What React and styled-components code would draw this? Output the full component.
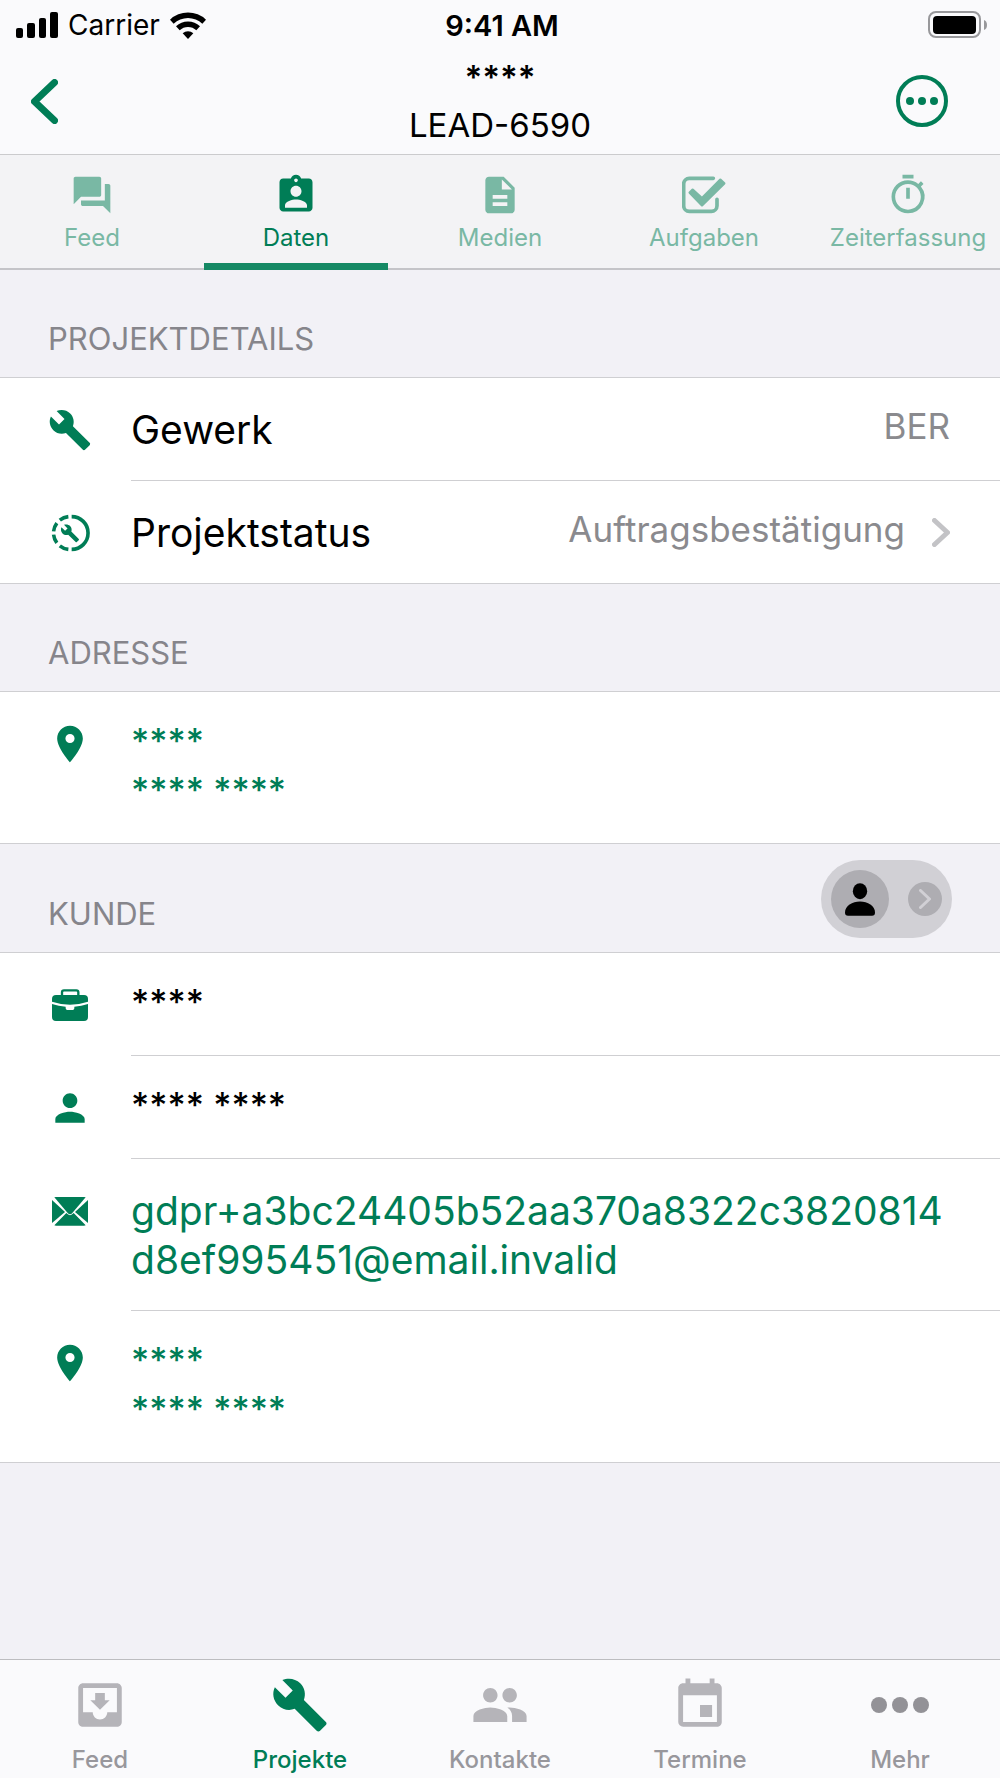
import React, {useState} from 'react'
import styled, {createGlobalStyle} from 'styled-components'
import {
    MdForum, MdAssignmentInd, MdDescription, MdOutlineTimer, MdBuild, MdLocationOn,
    MdPerson, MdMoveToInbox, MdPeople, MdEvent
} from 'react-icons/md'

const green = '#007d56'
const line = '#cfcfd2'

const GlobalStyle = createGlobalStyle`
    * {
        box-sizing: border-box;
    }
    body {
        margin: 0;
        background: #f2f1f6;
        color: #000;
        font-family: Inter, "Liberation Sans", sans-serif;
    }
    button {
        font-family: inherit;
        color: inherit;
        background: none;
        border: 0;
        padding: 0;
        cursor: pointer;
    }
    a {
        color: inherit;
        text-decoration: none;
    }
    svg {
        display: block;
        flex: none;
    }
`;

const Page = styled.div`
    min-height: 100vh;
    display: flex;
    flex-direction: column;
`;

const Header = styled.header`
    background: #fafafc;
    border-bottom: 1px solid #cbcbcd;
`;

const StatusBar = styled.div`
    height: 50px;
    padding: 0 12px 0 16px;
    display: grid;
    grid-template-columns: 1fr auto 1fr;
    align-items: center;
    font-size: 28px;
`;

const Carrier = styled.div`
    display: flex;
    align-items: center;
    gap: 10px;
`;

const Time = styled.div`
    font-weight: 600;
    font-size: 29px;
`;

const BatteryBox = styled.div`
    display: flex;
    justify-content: flex-end;
`;

const NavBar = styled.div`
    height: 104px;
    padding: 0 52px 2px 31px;
    display: grid;
    grid-template-columns: 73px 1fr 52px;
    align-items: center;
`;

const Title = styled.h1`
    margin: 0;
    font-size: 33px;
    line-height: 48px;
    font-weight: 400;
    text-align: center;
`;

const Masked = styled.span`
    display: block;
    font-weight: 600;
`;

const TabBar = styled.nav`
    height: 115px;
    display: grid;
    grid-template-columns: repeat(5, 1fr);
    gap: 20px;
    background: #f3f3f5;
    border-bottom: 2px solid #c4c4c8;
`;

const Tab = styled.button`
    margin-bottom: -2px;
    padding-top: 18px;
    display: flex;
    flex-direction: column;
    align-items: center;
    gap: 7px;
    font-size: 24px;
    line-height: 28px;
    color: ${({ $active }) => ($active ? green : '#79b8a4')};
    border-bottom: 7px solid ${({ $active }) => ($active ? '#158964' : 'transparent')};
`;

const SectionHeader = styled.div`
    min-height: 107px;
    padding: 16px 48px 14px;
    display: flex;
    align-items: flex-end;
    justify-content: space-between;
`;

const SectionTitle = styled.h2`
    margin: 0 0 6px;
    font-size: 31px;
    line-height: 36px;
    font-weight: 400;
    color: #86858b;
`;

const List = styled.div`
    background: #fff;
    border-top: 1px solid ${line};
    border-bottom: 1px solid ${line};
`;

const Row = styled.div`
    width: 100%;
    padding-left: 48px;
    display: flex;
    align-items: flex-start;
    text-align: left;
    color: ${({ $link }) => ($link ? green : '#000')};

    > svg {
        margin: 30px 39px 0 0;
        color: ${green};
    }
`;

const RowBody = styled.div`
    flex: 1;
    min-width: 0;
    padding: ${({ $masked }) => ($masked ? '25px 50px 28px 0' : '27px 50px 26px 0')};
    display: flex;
    justify-content: space-between;
    font-size: ${({ $masked }) => ($masked ? 35 : 39)}px;
    font-weight: ${({ $masked }) => ($masked ? 500 : 400)};
    line-height: 49px;

    ${Row}:not(:last-child) > & {
        border-bottom: 1px solid ${line};
    }
`;

const Text = styled.span`
    overflow-wrap: anywhere;
`;

const Value = styled.span`
    display: flex;
    gap: 27px;
    font-size: 35px;
    line-height: 43px;
    color: #8a8a8e;

    svg {
        margin-top: 10px;
    }
`;

const Switcher = styled.div`
    padding: 10px;
    display: flex;
    align-items: center;
    gap: 19px;
    border-radius: 39px;
    background: #d1d0d5;
`;

const RoundButton = styled.button`
    width: ${({ $size }) => $size}px;
    height: ${({ $size }) => $size}px;
    display: flex;
    align-items: center;
    justify-content: center;
    border-radius: 50%;
    background: #aeadb2;
`;

const BottomBar = styled.nav`
    height: 119px;
    margin-top: auto;
    display: grid;
    grid-template-columns: repeat(5, 1fr);
    background: #fafafc;
    border-top: 1px solid #bdbdc0;
`;

const BottomLink = styled.a`
    padding-top: 16px;
    display: flex;
    flex-direction: column;
    align-items: center;
    gap: 12px;
    font-size: 24px;
    line-height: 28px;
    font-weight: 500;
    color: ${({ $active }) => ($active ? green : '#98979c')};

    svg {
        color: ${({ $active }) => ($active ? green : '#b5b4b9')};
    }
`;

const Signal = () => (
    <svg width="42" height="26" viewBox="0 0 42 26">
        <rect x="0" y="16" width="7" height="10" rx="2" />
        <rect x="11" y="11" width="8" height="15" rx="2" />
        <rect x="23" y="6" width="7" height="20" rx="2" />
        <rect x="34" y="0" width="8" height="26" rx="2" />
    </svg>
)

const Wifi = () => (
    <svg width="36" height="27" viewBox="0 0 108 81">
        <path d="M0 23a78 78 0 0 1 108 0l-11 12a62 62 0 0 0-86 0z" />
        <path d="M18 43a52 52 0 0 1 72 0l-11 12a36 36 0 0 0-50 0z" />
        <path d="M38 64a24 24 0 0 1 32 0L54 81z" />
    </svg>
)

const Battery = () => (
    <svg width="60" height="28" viewBox="0 0 60 28">
        <rect x="1" y="1" width="51" height="25" rx="7" fill="none" stroke="#98989b" strokeWidth="2" />
        <rect x="5" y="5" width="43" height="18" rx="4" />
        <path d="M56 9q3 1 3 5t-3 5z" fill="#98989b" />
    </svg>
)

const Chevron = ({ width, height, stroke, color, back }) => (
    <svg width={width} height={height} fill="none" stroke={color} strokeWidth={stroke} strokeLinecap="round" strokeLinejoin="round">
        <path
            d={back
                ? `M${width - stroke / 2} ${stroke / 2}L${stroke / 2} ${height / 2}L${width - stroke / 2} ${height - stroke / 2}`
                : `M${stroke / 2} ${stroke / 2}L${width - stroke / 2} ${height / 2}L${stroke / 2} ${height - stroke / 2}`}
        />
    </svg>
)

const MoreCircle = () => (
    <svg width="52" height="52" viewBox="0 0 52 52" fill={green}>
        <circle cx="26" cy="26" r="24" fill="none" stroke={green} strokeWidth="4" />
        <circle cx="14" cy="26" r="4" />
        <circle cx="26" cy="26" r="4" />
        <circle cx="38" cy="26" r="4" />
    </svg>
)

const CheckBoxIcon = () => (
    <svg width="44" height="44" viewBox="0 -10 132 132">
        <path d="M94 6H22A17 17 0 0 0 5 23V88A17 17 0 0 0 22 105H88A17 17 0 0 0 105 88V69" fill="none" stroke="currentColor" strokeWidth="11" strokeLinecap="round" />
        <path d="M23 49L32 40L60 65L115 10L127 21L60 87Z" fill="currentColor" stroke="currentColor" strokeWidth="7" strokeLinejoin="round" />
    </svg>
)

const StatusIcon = () => (
    <svg width="44" height="44" viewBox="-12 -12 134 134">
        <g fill="none" stroke="currentColor" strokeWidth="11">
            <path d="M60 5A50 50 0 0 1 60 105" />
            <path d="M50 5A50 50 0 0 0 24 16" />
            <path d="M15 25A50 50 0 0 0 5 50" />
            <path d="M5 60A50 50 0 0 0 15 85" />
            <path d="M24 94A50 50 0 0 0 50 105" />
        </g>
        <MdBuild x={25} y={26} size={60} />
    </svg>
)

const BriefcaseIcon = () => (
    <svg width="44" height="44" viewBox="-12 -18 132 132" fill="currentColor">
        <path d="M30 20V10Q30 4 36 4H73Q79 4 79 10V20" fill="none" stroke="currentColor" strokeWidth="7" />
        <path d="M12 18H96Q108 18 108 30V38Q54 56 0 38V30Q0 18 12 18Z" />
        <path d="M0 45Q20 51 41 53V58Q41 63 46 63H62Q67 63 67 58V53Q88 51 108 45V84Q108 96 96 96H12Q0 96 0 84Z" />
    </svg>
)

const MailIcon = () => (
    <svg width="44" height="44" viewBox="-12 -24 132 132" fill="currentColor">
        <path d="M7 1Q9 0 12 0H96Q99 0 101 1L61 48Q54 56 47 48Z" />
        <path d="M0 9L39 45L0 78Z" />
        <path d="M108 9L69 45L108 78Z" />
        <path d="M7 85L43 48Q54 61 65 48L101 85Q99 86 96 86H12Q9 86 7 85Z" />
    </svg>
)

const UserIcon = () => (
    <svg width="30" height="33" viewBox="0 0 90 98">
        <ellipse cx="45" cy="24" rx="21.5" ry="24" />
        <path d="M9 98Q0 98 0 88C0 68 22 55 45 55S90 68 90 88Q90 98 81 98Z" />
    </svg>
)

const Dots = () => (
    <svg width="58" height="58" viewBox="0 0 58 58" fill="#939297">
        <circle cx="8" cy="29" r="8" />
        <circle cx="29" cy="29" r="8" />
        <circle cx="50" cy="29" r="8" />
    </svg>
)

const tabs = [
    { title: 'Feed', icon: <MdForum size={44} /> },
    { title: 'Daten', icon: <MdAssignmentInd size={44} /> },
    { title: 'Medien', icon: <MdDescription size={44} /> },
    { title: 'Aufgaben', icon: <CheckBoxIcon /> },
    { title: 'Zeiterfassung', icon: <MdOutlineTimer size={44} /> }
]

const bottomLinks = [
    { title: 'Feed', icon: <MdMoveToInbox size={58} /> },
    { title: 'Projekte', icon: <MdBuild size={58} /> },
    { title: 'Kontakte', icon: <MdPeople size={58} /> },
    { title: 'Termine', icon: <MdEvent size={58} /> },
    { title: 'Mehr', icon: <Dots /> }
]

const email = 'gdpr+a3bc24405b52aa370a8322c3820814d8ef995451@email.invalid'

function Address() {
    return (
        <Row as="a" href="#map" $link>
            <MdLocationOn size={44} />
            <RowBody $masked>
                <Text>****<br />**** ****</Text>
            </RowBody>
        </Row>
    )
}

function App() {
    const [tab, setTab] = useState('Daten')
    const [page, setPage] = useState('Projekte')

    return (
        <Page>
            <GlobalStyle />
            <Header>
                <StatusBar>
                    <Carrier><Signal />Carrier<Wifi /></Carrier>
                    <Time>9:41 AM</Time>
                    <BatteryBox><Battery /></BatteryBox>
                </StatusBar>
                <NavBar>
                    <button aria-label="Zurück">
                        <Chevron width={27} height={45} stroke={7} color={green} back />
                    </button>
                    <Title><Masked>****</Masked>LEAD-6590</Title>
                    <button aria-label="Optionen"><MoreCircle /></button>
                </NavBar>
            </Header>

            <TabBar>
                {tabs.map((item) => (
                    <Tab key={item.title} $active={tab === item.title} onClick={() => setTab(item.title)}>
                        {item.icon}
                        {item.title}
                    </Tab>
                ))}
            </TabBar>

            <main>
                <SectionHeader>
                    <SectionTitle>PROJEKTDETAILS</SectionTitle>
                </SectionHeader>
                <List>
                    <Row>
                        <MdBuild size={44} />
                        <RowBody>
                            <Text>Gewerk</Text>
                            <Value>BER</Value>
                        </RowBody>
                    </Row>
                    <Row as="button">
                        <StatusIcon />
                        <RowBody>
                            <Text>Projektstatus</Text>
                            <Value>
                                Auftragsbestätigung
                                <Chevron width={18} height={29} stroke={5} color="#c3c3c6" />
                            </Value>
                        </RowBody>
                    </Row>
                </List>

                <SectionHeader>
                    <SectionTitle>ADRESSE</SectionTitle>
                </SectionHeader>
                <List>
                    <Address />
                </List>

                <SectionHeader>
                    <SectionTitle>KUNDE</SectionTitle>
                    <Switcher>
                        <RoundButton $size={58} aria-label="Kontakt"><UserIcon /></RoundButton>
                        <RoundButton $size={34} aria-label="Weiter">
                            <Chevron width={12} height={20} stroke={3} color="#d1d0d5" />
                        </RoundButton>
                    </Switcher>
                </SectionHeader>
                <List>
                    <Row>
                        <BriefcaseIcon />
                        <RowBody $masked><Text>****</Text></RowBody>
                    </Row>
                    <Row>
                        <MdPerson size={44} />
                        <RowBody $masked><Text>**** ****</Text></RowBody>
                    </Row>
                    <Row as="a" href={`mailto:${email}`} $link>
                        <MailIcon />
                        <RowBody><Text>{email}</Text></RowBody>
                    </Row>
                    <Address />
                </List>
            </main>

            <BottomBar>
                {bottomLinks.map((item) => (
                    <BottomLink key={item.title} href="#" $active={page === item.title} onClick={() => setPage(item.title)}>
                        {item.icon}
                        {item.title}
                    </BottomLink>
                ))}
            </BottomBar>
        </Page>
    )
}

export default App
